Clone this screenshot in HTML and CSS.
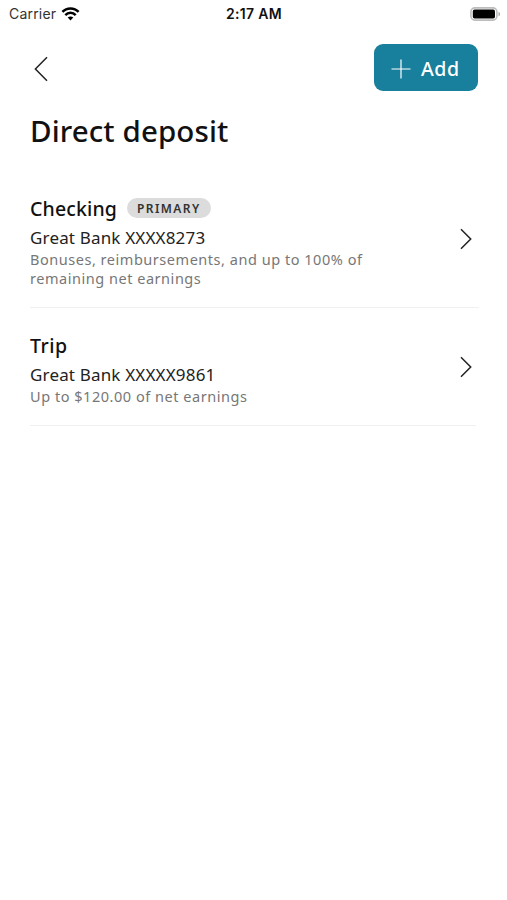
FILE: index.html
```html
<!DOCTYPE html>
<html lang="en">
<head>
    <meta charset="UTF-8">
    <meta name="viewport" content="width=device-width, initial-scale=1.0">
    <title>Direct deposit</title>
    <link rel="stylesheet" href="styles.css">
</head>
<body>
    <!-- Status bar -->
    <div class="status-bar">
        <div class="status-left">
            <span class="carrier">Carrier</span>
            <svg class="wifi" width="19" height="14" viewBox="0 0 18 14" fill="none" stroke="#000" stroke-width="2.5">
                <path d="M0.9 4.9C5.3 0.2 12.7 0.2 17.1 4.9"/>
                <path d="M3.8 8.1C6.7 5.1 11.3 5.1 14.2 8.1"/>
                <path d="M6.2 10.6C7.8 9.1 10.2 9.1 11.8 10.6L9 13.5Z" fill="#000" stroke="none"/>
            </svg>
        </div>
        <span class="time">2:17 AM</span>
        <div class="status-right">
            <svg width="31" height="14" viewBox="0 0 31 14">
                <rect x="0.9" y="0.9" width="26" height="12.2" rx="4" fill="#fff" stroke="#bcbcbc" stroke-width="1.6"/>
                <rect x="2.8" y="2.6" width="22.2" height="8.9" rx="1.8" fill="#000"/>
                <path d="M28.5 4.7C30.6 5.5 30.6 8.5 28.5 9.3Z" fill="#aaa"/>
            </svg>
        </div>
    </div>

    <div class="container">
        <div class="top-nav">
            <button class="back-btn" aria-label="Back">
                <svg width="14" height="26" viewBox="0 0 14 26" fill="none" stroke="#222" stroke-width="1.5">
                    <path d="M13 1.2L1.4 13L13 24.8"/>
                </svg>
            </button>
            <button class="add-btn">
                <svg width="20" height="20" viewBox="0 0 20 20" fill="none" stroke="#fff" stroke-width="1.2">
                    <path d="M10 0.5V19.5M0.5 10H19.5"/>
                </svg>
                <span>Add</span>
            </button>
        </div>

        <h1>Direct deposit</h1>

        <!-- Accounts -->
        <div class="account">
            <div class="account-info">
                <div class="account-head">
                    <h2>Checking</h2>
                    <span class="badge">PRIMARY</span>
                </div>
                <p class="bank">Great Bank XXXX8273</p>
                <p class="details">Bonuses, reimbursements, and up to 100% of<br>remaining net earnings</p>
            </div>
            <svg class="chevron" width="12" height="22" viewBox="0 0 12 22" fill="none" stroke="#222" stroke-width="1.5">
                <path d="M1 1.2L10.7 11L1 20.8"/>
            </svg>
        </div>

        <div class="account account-last">
            <div class="account-info">
                <div class="account-head">
                    <h2>Trip</h2>
                </div>
                <p class="bank">Great Bank XXXXX9861</p>
                <p class="details">Up to $120.00 of net earnings</p>
            </div>
            <svg class="chevron" width="12" height="22" viewBox="0 0 12 22" fill="none" stroke="#222" stroke-width="1.5">
                <path d="M1 1.2L10.7 11L1 20.8"/>
            </svg>
        </div>
    </div>
</body>
</html>
```

FILE: styles.css
```css
* {
    box-sizing: border-box;
}
body {
    margin: 0;
    min-height: 900px;
    background-color: #fff;
    color: #111;
    font-family: "Noto Sans", sans-serif;
}
h1, h2, p {
    margin: 0;
}
button {
    border: none;
    font-family: inherit;
    cursor: pointer;
}
svg {
    display: block;
    flex-shrink: 0;
}

/* Status bar */
.status-bar {
    display: grid;
    grid-template-columns: 1fr auto 1fr;
    align-items: center;
    height: 27px;
    padding: 0 6px 0 9px;
    font-family: Inter, sans-serif;
}
.status-left {
    display: flex;
    align-items: center;
    gap: 5px;
}
.carrier {
    font-size: 14px;
    letter-spacing: 0.2px;
    color: #333;
}
.time {
    margin-right: 2px;
    font-size: 14px;
    font-weight: 600;
    letter-spacing: 0.3px;
}
.status-right {
    display: flex;
    justify-content: flex-end;
}

.container {
    padding: 17px 28px 0 30px;
}
.top-nav {
    display: flex;
    align-items: center;
    justify-content: space-between;
    padding: 0 1px 0 4px;
}
.back-btn {
    padding: 2px 0 0;
    background: none;
}
.add-btn {
    display: flex;
    align-items: center;
    gap: 10px;
    width: 104px;
    height: 47px;
    padding: 2px 0 0 17px;
    border-radius: 9px;
    background-color: #18809c;
    color: #fff;
    font-size: 19.5px;
    font-weight: 500;
    letter-spacing: 0.6px;
}
h1 {
    margin-top: 20px;
    font-size: 29.5px;
    font-weight: 500;
    line-height: 40px;
    letter-spacing: 0.1px;
}

/* Account rows */
.account {
    display: flex;
    align-items: center;
    justify-content: space-between;
    height: 137px;
    padding: 23px 7px 18px 0;
    border-bottom: 1px solid #f0f0f0;
}
h1 + .account {
    margin-top: 20px;
}
.account-last {
    height: 118px;
    margin-right: 3px;
    padding-right: 4px;
}
.account-head {
    display: flex;
    align-items: center;
    gap: 10px;
    height: 28px;
}
h2 {
    font-size: 19.5px;
    font-weight: 500;
    line-height: 28px;
    letter-spacing: 0.15px;
}
.account-last h2 {
    letter-spacing: 0.5px;
}
.badge {
    height: 20px;
    margin-bottom: 1px;
    padding: 0 10px;
    border-radius: 10px;
    background-color: #dcdcdc;
    color: #333;
    font-size: 12px;
    font-weight: 600;
    line-height: 21px;
    letter-spacing: 1.4px;
}
.bank {
    margin-top: 3px;
    color: #222;
    font-size: 17px;
    line-height: 24px;
    letter-spacing: 0.17px;
}
.details {
    color: #777;
    font-size: 14.5px;
    line-height: 19.5px;
    letter-spacing: 0.53px;
}
.chevron {
    margin-bottom: 5px;
}
```
